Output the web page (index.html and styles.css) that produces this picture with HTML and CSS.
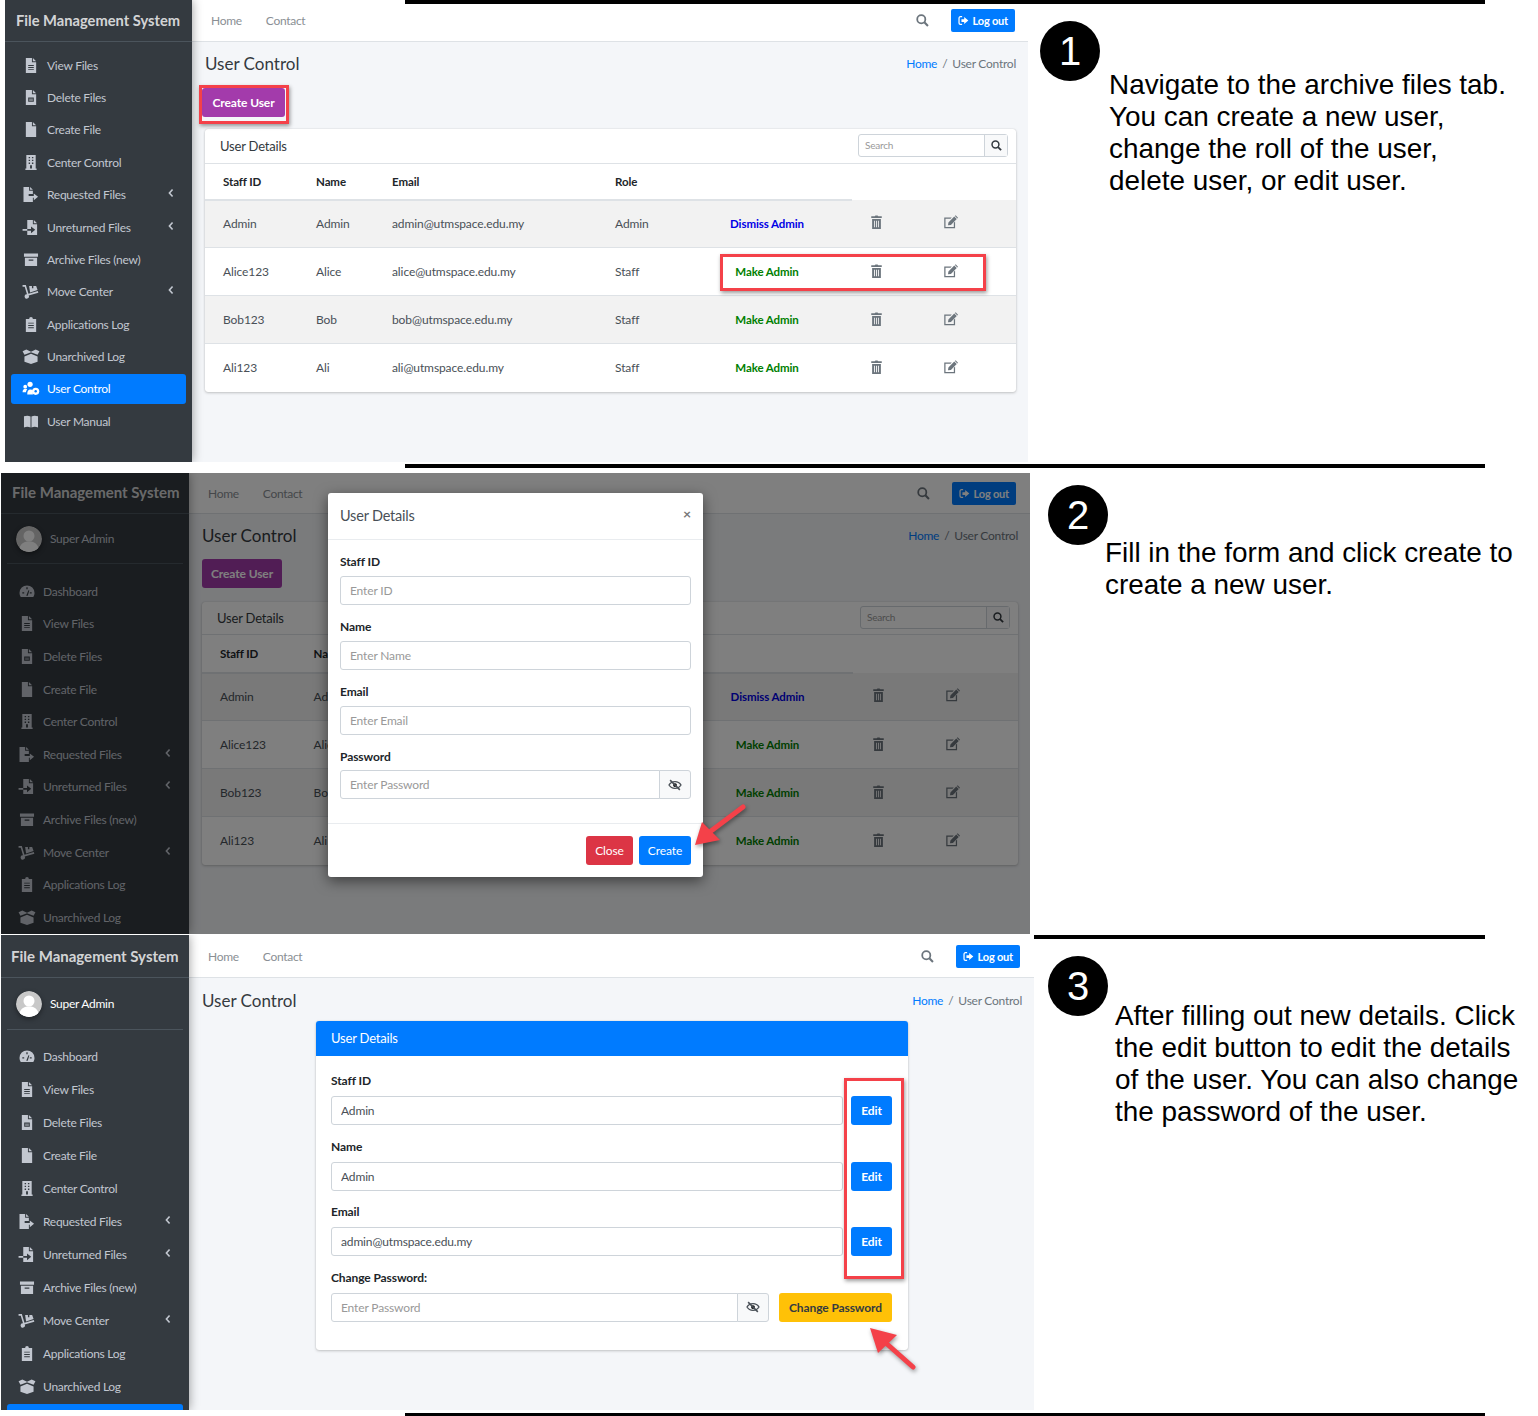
FILE: index.html
```html
<!DOCTYPE html>
<html lang="en">
<head>
    <meta charset="UTF-8">
    <meta name="viewport" content="width=device-width, initial-scale=1.0">
    <title>User Control Guide</title>
    <link rel="stylesheet" href="styles.css">
</head>
<body>
    <svg class="icon-defs" aria-hidden="true">
        <symbol id="i-file" viewBox="0 0 16 16"><path d="M2.500 0H9v4.500h4.500V16h-11zM10 0l3.500 3.500H10z"/></symbol>
        <symbol id="i-file-alt" viewBox="0 0 16 16"><path fill-rule="evenodd" d="M2.500 0H9v4.500h4.500V16h-11zM5 7.500v1h6v-1zM5 9.700v1h6v-1zM5 11.900v1h6v-1z"/><path d="M10 0l3.500 3.500H10z"/></symbol>
        <symbol id="i-file-del" viewBox="0 0 16 16"><path fill-rule="evenodd" d="M2.500 0H9v4.500h4.500V16h-11zM5 8v4.500h6V8zM6 9.200h4v.8H6zM6 10.800h4v.7H6z"/><path d="M10 0l3.500 3.500H10z"/></symbol>
        <symbol id="i-building" viewBox="0 0 16 16"><path fill-rule="evenodd" d="M3 0h10v14.500h1V16H2v-1.500h1zM5.500 2v1.500h1.500V2zM9 2v1.500h1.500V2zM5.500 5v1.500h1.500V5zM9 5v1.500h1.500V5zM5.500 8v1.500h1.500V8zM9 8v1.500h1.500V8zM7 11v3.500h2V11z"/></symbol>
        <symbol id="i-file-export" viewBox="0 0 18 16"><path d="M1 0h6v4h4v3.500H6.500v2H11V16H1zM8 0l3 3H8zM12 7l4.500 3.500L12 14v-2.500H8v-2h4z"/></symbol>
        <symbol id="i-file-import" viewBox="0 0 18 16"><path d="M5 0h6v4.500h4.500V16H5v-4.500h4V14l4.500-3.500L9 7v2.500H5zM12 0l3.500 3.500H12zM0 9.500h5v2H0z"/></symbol>
        <symbol id="i-archive" viewBox="0 0 16 16"><path fill-rule="evenodd" d="M.5 1.500h15v3.500H.5zM1.500 6h13v9h-13zM5.500 8v1.300h5V8z"/></symbol>
        <symbol id="i-dolly" viewBox="0 0 18 16"><path d="M0 1h3.500l2.800 9.500 10-3 .5 1.700-10.300 3a2.300 2.300 0 1 1-1.800-1.200L2.300 2.800H0z"/><path d="M7 2h3v2.500h1.500V2h3l1.500 4.500-8 2.500z"/></symbol>
        <symbol id="i-clipboard" viewBox="0 0 16 16"><path fill-rule="evenodd" d="M2.500 2H6a2 2 0 0 1 4 0h3.500v14h-11zM5 6v1h6V6zM5 8.500v1h6v-1zM5 11v1h6v-1z"/></symbol>
        <symbol id="i-box-open" viewBox="0 0 18 16"><path d="M0 2.500L4 .5 9 3l5-2.500 4 2-2 3.500-7-2.500-7 2.500zM2 8l7-3 7 3v5.500l-7 2.500-7-2.500z"/></symbol>
        <symbol id="i-users-cog" viewBox="0 0 18 16"><circle cx="8" cy="3.500" r="2.800"/><circle cx="2.800" cy="6" r="2"/><path d="M0 12c0-2.500 1-3.800 3-3.800 1 0 1.500.3 2 .8-1 1-1.300 1.800-1.300 3zM5 14.500c0-3.800 1-5.500 3.500-5.500 1.200 0 2 .3 2.500.8v4.700z"/><circle cx="14" cy="11" r="3.800"/><circle cx="14" cy="11" r="1.300" class="icon-hole"/></symbol>
        <symbol id="i-book" viewBox="0 0 16 16"><path d="M.5 2.500c2.500-1 5-1 7 .2v11.800c-2-1.200-4.500-1.200-7-.2zM8.500 2.700c2-1.200 4.500-1.200 7-.2v11.800c-2.500-1-5-1-7 .2z"/></symbol>
        <symbol id="i-gauge" viewBox="0 0 16 16"><path fill-rule="evenodd" d="M8 1.500A8 8 0 0 0 0 9.500c0 1.600.4 3 1.300 4.300h13.400c.9-1.300 1.300-2.700 1.300-4.300a8 8 0 0 0-8-8zM7.300 3.500v2h1.400v-2zM3 8.800v1.400h2V8.800zM11 8.800v1.400h2V8.800zM7.200 12.500h1.600l1.700-5.500-1-.3z"/></symbol>
        <symbol id="i-chevron" viewBox="0 0 10 16"><path d="M7.500 2.500L2.500 8l5 5.500" fill="none" stroke="currentColor" stroke-width="2.600"/></symbol>
        <symbol id="i-search" viewBox="0 0 16 16"><circle cx="6.500" cy="6.500" r="5" fill="none" stroke="currentColor" stroke-width="2.200"/><path d="M10.300 10.300l4.400 4.400" stroke="currentColor" stroke-width="2.600"/></symbol>
        <symbol id="i-signout" viewBox="0 0 16 16"><path d="M6 2.500H3.500A2 2 0 0 0 1.500 4.500v7a2 2 0 0 0 2 2H6" fill="none" stroke="currentColor" stroke-width="1.800"/><path d="M9 3l6 5-6 5v-3H5V6h4z"/></symbol>
        <symbol id="i-trash" viewBox="0 0 16 16"><path fill-rule="evenodd" d="M2 1.500h4L6.800.5h2.400l.8 1H14v2H2zM3 4.500h10V16H3zM5.300 6.500v7.500h1V6.500zM7.500 6.500v7.500h1V6.500zM9.700 6.500v7.500h1V6.500z"/></symbol>
        <symbol id="i-edit" viewBox="0 0 18 16"><path d="M2 2.500h8.500L9 4H3v10h10V9l1.500-1.500V15.500H1.500V2.500z"/><path d="M6.500 8.500L13.500 1.500l3 3-7 7-3.500.5zM14.300.8l.9-.8 2.800 2.800-.8.9z"/></symbol>
        <symbol id="i-eye-slash" viewBox="0 0 18 16"><path d="M9 3.500C5.500 3.500 2.500 5.500 1 8c1.500 2.500 4.500 4.500 8 4.500s6.500-2 8-4.500c-1.500-2.500-4.500-4.500-8-4.500z" fill="none" stroke="currentColor" stroke-width="1.800"/><circle cx="9" cy="8" r="2.500"/><path d="M2.500 1.500l13 13" stroke="currentColor" stroke-width="2"/></symbol>
        <symbol id="i-avatar" viewBox="0 0 26 26"><circle cx="13" cy="13" r="13" fill="#c8c8c8"/><circle cx="13" cy="10" r="5.500" fill="#fff"/><path d="M3.500 22c1.500-5 5-6.500 9.500-6.500s8 1.500 9.500 6.500A13 13 0 0 1 13 26a13 13 0 0 1-9.500-4z" fill="#fff"/></symbol>
    </svg>

    <!-- step 1 -->
    <section class="step step-1">
        <div class="rule rule-top"></div>
        <div class="rule rule-bottom"></div>
        <div class="screen">
            <aside class="sidebar">
                <div class="brand">File Management System</div>
                <ul class="nav">
                    <li class="nav-item"><svg class="nav-icon"><use href="#i-file-alt"/></svg>View Files</li>
                    <li class="nav-item"><svg class="nav-icon"><use href="#i-file-del"/></svg>Delete Files</li>
                    <li class="nav-item"><svg class="nav-icon"><use href="#i-file"/></svg>Create File</li>
                    <li class="nav-item"><svg class="nav-icon"><use href="#i-building"/></svg>Center Control</li>
                    <li class="nav-item"><svg class="nav-icon"><use href="#i-file-export"/></svg>Requested Files<svg class="nav-arrow"><use href="#i-chevron"/></svg></li>
                    <li class="nav-item"><svg class="nav-icon"><use href="#i-file-import"/></svg>Unreturned Files<svg class="nav-arrow"><use href="#i-chevron"/></svg></li>
                    <li class="nav-item"><svg class="nav-icon"><use href="#i-archive"/></svg>Archive Files (new)</li>
                    <li class="nav-item"><svg class="nav-icon"><use href="#i-dolly"/></svg>Move Center<svg class="nav-arrow"><use href="#i-chevron"/></svg></li>
                    <li class="nav-item"><svg class="nav-icon"><use href="#i-clipboard"/></svg>Applications Log</li>
                    <li class="nav-item"><svg class="nav-icon"><use href="#i-box-open"/></svg>Unarchived Log</li>
                    <li class="nav-item active"><svg class="nav-icon"><use href="#i-users-cog"/></svg>User Control</li>
                    <li class="nav-item"><svg class="nav-icon"><use href="#i-book"/></svg>User Manual</li>
                </ul>
            </aside>
            <main class="main">
                <div class="topbar">
                    <a class="top-link">Home</a>
                    <a class="top-link">Contact</a>
                    <svg class="top-search"><use href="#i-search"/></svg>
                    <button class="btn-logout"><svg class="logout-icon"><use href="#i-signout"/></svg>Log out</button>
                </div>
                <div class="content">
                    <div class="title-row">
                        <h1 class="page-title">User Control</h1>
                        <div class="breadcrumb"><a>Home</a><span class="crumb-sep">/</span>User Control</div>
                    </div>
                    <button class="btn-create">Create User</button>
                    <div class="card">
                        <div class="card-head">
                            <span>User Details</span>
                            <div class="search-box"><span class="search-text">Search</span><span class="search-btn"><svg class="search-icon"><use href="#i-search"/></svg></span></div>
                        </div>
                        <table class="users">
                            <colgroup><col class="c1"><col class="c2"><col class="c3"><col class="c4"><col class="c5"><col class="c6"><col class="c7"><col></colgroup>
                            <tr><th>Staff ID</th><th>Name</th><th>Email</th><th>Role</th><th></th><th class="blank"></th><th class="blank"></th><th class="blank"></th></tr>
                            <tr><td>Admin</td><td>Admin</td><td>admin@utmspace.edu.my</td><td>Admin</td><td class="role-action dismiss">Dismiss Admin</td><td class="tool"><svg class="tool-icon"><use href="#i-trash"/></svg></td><td class="tool"><svg class="tool-icon"><use href="#i-edit"/></svg></td><td></td></tr>
                            <tr><td>Alice123</td><td>Alice</td><td>alice@utmspace.edu.my</td><td>Staff</td><td class="role-action make">Make Admin</td><td class="tool"><svg class="tool-icon"><use href="#i-trash"/></svg></td><td class="tool"><svg class="tool-icon"><use href="#i-edit"/></svg></td><td></td></tr>
                            <tr><td>Bob123</td><td>Bob</td><td>bob@utmspace.edu.my</td><td>Staff</td><td class="role-action make">Make Admin</td><td class="tool"><svg class="tool-icon"><use href="#i-trash"/></svg></td><td class="tool"><svg class="tool-icon"><use href="#i-edit"/></svg></td><td></td></tr>
                            <tr><td>Ali123</td><td>Ali</td><td>ali@utmspace.edu.my</td><td>Staff</td><td class="role-action make">Make Admin</td><td class="tool"><svg class="tool-icon"><use href="#i-trash"/></svg></td><td class="tool"><svg class="tool-icon"><use href="#i-edit"/></svg></td><td></td></tr>
                        </table>
                    </div>
                </div>
            </main>
            <div class="mark mark-create"></div>
            <div class="mark mark-row"></div>
        </div>
        <div class="note">
            <div class="badge">1</div>
            <p class="note-text">Navigate to the archive files tab.<br>You can create a new user,<br>change the roll of the user,<br>delete user, or edit user.</p>
        </div>
    </section>

    <!-- step 2 -->
    <section class="step step-2">
        <div class="screen">
            <aside class="sidebar">
                <div class="brand">File Management System</div>
                <div class="user-panel"><svg class="avatar"><use href="#i-avatar"/></svg>Super Admin</div>
                <ul class="nav">
                    <li class="nav-item"><svg class="nav-icon"><use href="#i-gauge"/></svg>Dashboard</li>
                    <li class="nav-item"><svg class="nav-icon"><use href="#i-file-alt"/></svg>View Files</li>
                    <li class="nav-item"><svg class="nav-icon"><use href="#i-file-del"/></svg>Delete Files</li>
                    <li class="nav-item"><svg class="nav-icon"><use href="#i-file"/></svg>Create File</li>
                    <li class="nav-item"><svg class="nav-icon"><use href="#i-building"/></svg>Center Control</li>
                    <li class="nav-item"><svg class="nav-icon"><use href="#i-file-export"/></svg>Requested Files<svg class="nav-arrow"><use href="#i-chevron"/></svg></li>
                    <li class="nav-item"><svg class="nav-icon"><use href="#i-file-import"/></svg>Unreturned Files<svg class="nav-arrow"><use href="#i-chevron"/></svg></li>
                    <li class="nav-item"><svg class="nav-icon"><use href="#i-archive"/></svg>Archive Files (new)</li>
                    <li class="nav-item"><svg class="nav-icon"><use href="#i-dolly"/></svg>Move Center<svg class="nav-arrow"><use href="#i-chevron"/></svg></li>
                    <li class="nav-item"><svg class="nav-icon"><use href="#i-clipboard"/></svg>Applications Log</li>
                    <li class="nav-item"><svg class="nav-icon"><use href="#i-box-open"/></svg>Unarchived Log</li>
                </ul>
            </aside>
            <main class="main">
                <div class="topbar">
                    <a class="top-link">Home</a>
                    <a class="top-link">Contact</a>
                    <svg class="top-search"><use href="#i-search"/></svg>
                    <button class="btn-logout"><svg class="logout-icon"><use href="#i-signout"/></svg>Log out</button>
                </div>
                <div class="content">
                    <div class="title-row">
                        <h1 class="page-title">User Control</h1>
                        <div class="breadcrumb"><a>Home</a><span class="crumb-sep">/</span>User Control</div>
                    </div>
                    <button class="btn-create">Create User</button>
                    <div class="card">
                        <div class="card-head">
                            <span>User Details</span>
                            <div class="search-box"><span class="search-text">Search</span><span class="search-btn"><svg class="search-icon"><use href="#i-search"/></svg></span></div>
                        </div>
                        <table class="users">
                            <colgroup><col class="c1"><col class="c2"><col class="c3"><col class="c4"><col class="c5"><col class="c6"><col class="c7"><col></colgroup>
                            <tr><th>Staff ID</th><th>Name</th><th>Email</th><th>Role</th><th></th><th class="blank"></th><th class="blank"></th><th class="blank"></th></tr>
                            <tr><td>Admin</td><td>Admin</td><td>admin@utmspace.edu.my</td><td>Admin</td><td class="role-action dismiss">Dismiss Admin</td><td class="tool"><svg class="tool-icon"><use href="#i-trash"/></svg></td><td class="tool"><svg class="tool-icon"><use href="#i-edit"/></svg></td><td></td></tr>
                            <tr><td>Alice123</td><td>Alice</td><td>alice@utmspace.edu.my</td><td>Staff</td><td class="role-action make">Make Admin</td><td class="tool"><svg class="tool-icon"><use href="#i-trash"/></svg></td><td class="tool"><svg class="tool-icon"><use href="#i-edit"/></svg></td><td></td></tr>
                            <tr><td>Bob123</td><td>Bob</td><td>bob@utmspace.edu.my</td><td>Staff</td><td class="role-action make">Make Admin</td><td class="tool"><svg class="tool-icon"><use href="#i-trash"/></svg></td><td class="tool"><svg class="tool-icon"><use href="#i-edit"/></svg></td><td></td></tr>
                            <tr><td>Ali123</td><td>Ali</td><td>ali@utmspace.edu.my</td><td>Staff</td><td class="role-action make">Make Admin</td><td class="tool"><svg class="tool-icon"><use href="#i-trash"/></svg></td><td class="tool"><svg class="tool-icon"><use href="#i-edit"/></svg></td><td></td></tr>
                        </table>
                    </div>
                </div>
            </main>
            <div class="backdrop">
                <div class="modal">
                    <div class="modal-head"><span>User Details</span><span class="modal-close">&times;</span></div>
                    <div class="modal-body">
                        <label class="field-label">Staff ID</label>
                        <input class="field" placeholder="Enter ID">
                        <label class="field-label">Name</label>
                        <input class="field" placeholder="Enter Name">
                        <label class="field-label">Email</label>
                        <input class="field" placeholder="Enter Email">
                        <label class="field-label">Password</label>
                        <div class="input-group">
                            <input class="field" placeholder="Enter Password">
                            <span class="eye-btn"><svg class="eye-icon"><use href="#i-eye-slash"/></svg></span>
                        </div>
                    </div>
                    <div class="modal-foot">
                        <button class="btn btn-red">Close</button>
                        <button class="btn btn-blue">Create</button>
                    </div>
                </div>
            </div>
            <svg class="arrow arrow-create" viewBox="0 0 60 50"><path class="arrow-shaft" d="M53 7L21 31"/><path class="arrow-head" d="M5 45L12 22L30 40z"/></svg>
        </div>
        <div class="note">
            <div class="badge">2</div>
            <p class="note-text">Fill in the form and click create to<br>create a new user.</p>
        </div>
    </section>

    <!-- step 3 -->
    <section class="step step-3">
        <div class="rule rule-top"></div>
        <div class="rule rule-bottom"></div>
        <div class="screen">
            <aside class="sidebar">
                <div class="brand">File Management System</div>
                <div class="user-panel"><svg class="avatar"><use href="#i-avatar"/></svg>Super Admin</div>
                <ul class="nav">
                    <li class="nav-item"><svg class="nav-icon"><use href="#i-gauge"/></svg>Dashboard</li>
                    <li class="nav-item"><svg class="nav-icon"><use href="#i-file-alt"/></svg>View Files</li>
                    <li class="nav-item"><svg class="nav-icon"><use href="#i-file-del"/></svg>Delete Files</li>
                    <li class="nav-item"><svg class="nav-icon"><use href="#i-file"/></svg>Create File</li>
                    <li class="nav-item"><svg class="nav-icon"><use href="#i-building"/></svg>Center Control</li>
                    <li class="nav-item"><svg class="nav-icon"><use href="#i-file-export"/></svg>Requested Files<svg class="nav-arrow"><use href="#i-chevron"/></svg></li>
                    <li class="nav-item"><svg class="nav-icon"><use href="#i-file-import"/></svg>Unreturned Files<svg class="nav-arrow"><use href="#i-chevron"/></svg></li>
                    <li class="nav-item"><svg class="nav-icon"><use href="#i-archive"/></svg>Archive Files (new)</li>
                    <li class="nav-item"><svg class="nav-icon"><use href="#i-dolly"/></svg>Move Center<svg class="nav-arrow"><use href="#i-chevron"/></svg></li>
                    <li class="nav-item"><svg class="nav-icon"><use href="#i-clipboard"/></svg>Applications Log</li>
                    <li class="nav-item"><svg class="nav-icon"><use href="#i-box-open"/></svg>Unarchived Log</li>
                    <li class="nav-item active"></li>
                </ul>
            </aside>
            <main class="main">
                <div class="topbar">
                    <a class="top-link">Home</a>
                    <a class="top-link">Contact</a>
                    <svg class="top-search"><use href="#i-search"/></svg>
                    <button class="btn-logout"><svg class="logout-icon"><use href="#i-signout"/></svg>Log out</button>
                </div>
                <div class="content">
                    <div class="title-row">
                        <h1 class="page-title">User Control</h1>
                        <div class="breadcrumb"><a>Home</a><span class="crumb-sep">/</span>User Control</div>
                    </div>
                    <div class="edit-card">
                        <div class="edit-head">User Details</div>
                        <div class="edit-body">
                            <label class="field-label">Staff ID</label>
                            <div class="edit-row"><input class="field" value="Admin"><button class="btn btn-blue btn-edit">Edit</button></div>
                            <label class="field-label">Name</label>
                            <div class="edit-row"><input class="field" value="Admin"><button class="btn btn-blue btn-edit">Edit</button></div>
                            <label class="field-label">Email</label>
                            <div class="edit-row"><input class="field" value="admin@utmspace.edu.my"><button class="btn btn-blue btn-edit">Edit</button></div>
                            <label class="field-label">Change Password:</label>
                            <div class="edit-row">
                                <div class="input-group">
                                    <input class="field" placeholder="Enter Password">
                                    <span class="eye-btn"><svg class="eye-icon"><use href="#i-eye-slash"/></svg></span>
                                </div>
                                <button class="btn btn-yellow">Change Password</button>
                            </div>
                        </div>
                    </div>
                </div>
            </main>
            <div class="mark mark-edit"></div>
            <svg class="arrow arrow-password" viewBox="0 0 55 50"><path class="arrow-shaft" d="M48 44L22 21"/><path class="arrow-head" d="M5 5L32 12L13 30z"/></svg>
        </div>
        <div class="note">
            <div class="badge">3</div>
            <p class="note-text">After filling out new details. Click<br>the edit button to edit the details<br>of the user. You can also change<br>the password of the user.</p>
        </div>
    </section>
</body>
</html>
```

FILE: styles.css
```css
* {
    box-sizing: border-box;
}

body {
    margin: 0;
    background-color: #fff;
    font-family: "Lato", "Liberation Sans", sans-serif;
    font-size: 12px;
    letter-spacing: -0.1px;
    color: #212529;
}

.icon-defs {
    position: absolute;
    width: 0;
    height: 0;
}

.icon-hole {
    fill: #007bff;
}

.step {
    position: relative;
    display: flex;
    align-items: flex-start;
}

.step-1 {
    height: 473px;
    padding-left: 5px;
    --item-h: 32.4px;
}

.step-2 {
    height: 462px;
    padding-left: 1px;
    --item-h: 32.6px;
}

.step-3 {
    height: 481px;
    padding-left: 1px;
    --item-h: 33px;
}

.rule {
    position: absolute;
    left: 405px;
    width: 1080px;
    height: 4px;
    background-color: #000;
    z-index: 2;
}

.rule-top {
    top: 0;
}

.step-1 .rule-bottom {
    top: 464px;
}

.step-3 .rule-bottom {
    top: 478px;
}

.step-3 .rule-top {
    left: 1034px;
    width: 451px;
}

/* screenshot frames */
.screen {
    position: relative;
    display: flex;
    flex-shrink: 0;
    overflow: hidden;
    background-color: #f4f6f9;
}

.step-1 .screen {
    width: 1023px;
    height: 462px;
}

.step-2 .screen {
    width: 1029px;
    height: 461px;
}

.step-3 .screen {
    width: 1033px;
    height: 475px;
}

/* sidebar */
.sidebar {
    width: 188px;
    flex-shrink: 0;
    background-color: #343a40;
    color: #c2c7d0;
    box-shadow: 0 0 10px rgba(0, 0, 0, 0.4);
    z-index: 1;
}

.step-1 .sidebar {
    width: 187px;
}

.brand {
    height: 42px;
    padding-left: 11px;
    line-height: 40px;
    font-size: 14.700px;
    font-weight: 700;
    letter-spacing: 0;
    color: rgba(255, 255, 255, 0.8);
    border-bottom: 1px solid #4b545c;
    white-space: nowrap;
}

.step-2 .brand {
    height: 41px;
    line-height: 38px;
    font-size: 15px;
}

.step-3 .brand {
    height: 43px;
    line-height: 43px;
    padding-left: 10px;
    font-size: 15px;
}

.user-panel {
    display: flex;
    align-items: center;
    height: 50px;
    margin: 0 6px;
    padding-left: 9px;
    border-bottom: 1px solid #4b545c;
    letter-spacing: -0.27px;
    color: #fff;
}

.step-2 .user-panel {
    color: #c2c7d0;
}

.step-3 .user-panel {
    height: 52px;
}

.avatar {
    width: 26px;
    height: 26px;
    margin-right: 8px;
    border-radius: 50%;
    box-shadow: 0 2px 5px rgba(0, 0, 0, 0.4);
}

.nav {
    list-style: none;
    margin: 0;
    padding: 7px 6px 0;
}

.step-2 .nav {
    padding-top: 11px;
}

.step-3 .nav {
    padding-top: 10px;
}

.nav-item {
    display: flex;
    align-items: center;
    height: var(--item-h);
    padding-left: 11px;
    border-radius: 3px;
    letter-spacing: -0.27px;
    white-space: nowrap;
}

.nav-item.active {
    height: 30px;
    margin: 1px 0;
    background-color: #007bff;
    color: #fff;
}

.nav-icon {
    width: 18px;
    height: 15px;
    margin-right: 7px;
    fill: currentColor;
}

.nav-arrow {
    width: 8px;
    height: 10px;
    margin-left: auto;
    margin-right: 11px;
    margin-bottom: 3px;
    color: #c2c7d0;
}

/* top bar */
.main {
    flex: 1;
    min-width: 0;
}

.topbar {
    display: flex;
    align-items: center;
    height: 42px;
    padding: 0 13px 0 19px;
    background-color: #fff;
    border-bottom: 1px solid #dee2e6;
}

.step-2 .topbar {
    height: 41px;
    padding-right: 14px;
}

.step-3 .topbar {
    height: 43px;
    padding-right: 14px;
}

.top-link {
    margin-right: 24px;
    letter-spacing: -0.3px;
    color: #8a8f94;
}

.top-search {
    width: 13px;
    height: 13px;
    margin-left: auto;
    margin-right: 22px;
    color: #6c757d;
}

.btn-logout {
    display: flex;
    align-items: center;
    height: 23px;
    padding: 0 7px;
    border: 0;
    border-radius: 2px;
    background-color: #007bff;
    color: #fff;
    font: 700 11px "Lato", sans-serif;
    letter-spacing: -0.2px;
}

.logout-icon {
    width: 11px;
    height: 11px;
    margin-right: 4px;
    fill: currentColor;
}

/* content */
.content {
    padding: 12px 12px 0 13px;
}

.step-3 .content {
    padding-top: 13px;
}

.title-row {
    display: flex;
    align-items: center;
    justify-content: space-between;
    height: 20px;
    padding-bottom: 2px;
}

.page-title {
    margin: 0;
    font-size: 17px;
    font-weight: 400;
    letter-spacing: 0;
    color: #343a40;
}

.breadcrumb {
    letter-spacing: -0.25px;
    color: #6c757d;
}

.breadcrumb a {
    color: #007bff;
}

.crumb-sep {
    margin: 0 5px;
}

.btn-create {
    display: block;
    width: 83px;
    height: 29px;
    margin: 14px 0 12px -3px;
    border: 0;
    border-radius: 3px;
    background-color: #a33bab;
    color: #fff;
    font: 700 12px "Lato", sans-serif;
    letter-spacing: -0.1px;
}

.step-2 .btn-create {
    width: 80px;
    margin-left: 0;
    margin-top: 13px;
    margin-bottom: 14px;
}

.card {
    background-color: #fff;
    border-radius: 3px;
    box-shadow: 0 0 1px rgba(0, 0, 0, 0.2), 0 1px 3px rgba(0, 0, 0, 0.2);
}

.card-head {
    display: flex;
    align-items: center;
    justify-content: space-between;
    height: 34px;
    padding: 0 8px 0 15px;
    font-size: 13px;
    letter-spacing: -0.2px;
    color: #343a40;
}

.step-2 .card-head {
    height: 32px;
}

.search-box {
    display: flex;
    width: 150px;
    height: 23px;
    margin-bottom: 1px;
    border: 1px solid #ced4da;
    border-radius: 3px;
    font-size: 10px;
}

.search-text {
    flex: 1;
    padding-left: 6px;
    line-height: 21px;
    color: #999;
}

.search-btn {
    display: flex;
    align-items: center;
    justify-content: center;
    width: 23px;
    border-left: 1px solid #ced4da;
    background-color: #f8f9fa;
}

.search-icon {
    width: 11px;
    height: 11px;
    color: #343a40;
}

.users {
    width: 100%;
    table-layout: fixed;
    border-collapse: collapse;
}

.c1 { width: 11.470%; }
.c2 { width: 9.370%; }
.c3 { width: 27.500%; }
.c4 { width: 12.700%; }
.c5 { width: 18.740%; }
.c6 { width: 6.170%; }
.c7 { width: 12.080%; }

.users th {
    height: 36px;
    padding: 0 0 0 18px;
    text-align: left;
    font-size: 11.500px;
    border-top: 1px solid #dee2e6;
    border-bottom: 2px solid #dee2e6;
}

.step-2 .users th {
    height: 38px;
}

.users th.blank {
    border-bottom: 0;
}

.users td {
    height: 48px;
    padding: 0 0 0 18px;
    color: #495057;
    border-bottom: 1px solid #dee2e6;
}

.users tr:nth-child(even) td {
    background-color: #f2f2f2;
}

.users tr:last-child td {
    border-bottom: 0;
}

.users td.role-action {
    padding: 0 18px 0 0;
    text-align: center;
    font-weight: 700;
    font-size: 11.500px;
}

.users td.dismiss {
    color: #0000e6;
}

.users td.make {
    color: #008000;
}

.users td.tool {
    padding: 0;
    text-align: center;
}

.tool-icon {
    display: block;
    width: 15px;
    height: 14px;
    margin: -2px auto 0;
    fill: #6c757d;
}

/* forms */
.field-label {
    display: block;
    margin-bottom: 7px;
    line-height: 15px;
    font-weight: 700;
    font-size: 12px;
}

.field {
    display: block;
    width: 100%;
    height: 29px;
    padding: 0 9px;
    border: 1px solid #ced4da;
    border-radius: 3px;
    background-color: #fff;
    font: 12px "Lato", sans-serif;
    letter-spacing: -0.15px;
    color: #495057;
}

.field::placeholder {
    color: #999;
}

.input-group {
    display: flex;
    flex: 1;
}

.input-group .field {
    flex: 1;
    border-radius: 3px 0 0 3px;
}

.eye-btn {
    display: flex;
    align-items: center;
    justify-content: center;
    width: 32px;
    height: 29px;
    flex-shrink: 0;
    margin-left: -1px;
    border: 1px solid #ced4da;
    border-radius: 0 3px 3px 0;
    background-color: #f8f9fa;
}

.eye-icon {
    width: 14px;
    height: 12px;
    color: #495057;
}

.btn {
    height: 29px;
    padding: 0;
    border: 0;
    border-radius: 3px;
    font: 12px "Lato", sans-serif;
    letter-spacing: -0.1px;
    color: #fff;
    flex-shrink: 0;
}

.btn-red {
    width: 47px;
    background-color: #dc3545;
}

.btn-blue {
    width: 52px;
    background-color: #007bff;
}

.btn-blue.btn-edit {
    width: 41px;
    font-weight: 700;
}

.btn-yellow {
    width: 113px;
    background-color: #ffc107;
    color: #343a40;
    font-weight: 700;
}

/* modal */
.backdrop {
    position: absolute;
    inset: 0;
    z-index: 3;
    background-color: rgba(0, 0, 0, 0.5);
    padding: 20px 0 0 327px;
}

.modal {
    width: 375px;
    background-color: #fff;
    border-radius: 3px;
    box-shadow: 0 4px 14px rgba(0, 0, 0, 0.5);
}

.modal-head {
    display: flex;
    justify-content: space-between;
    align-items: center;
    height: 47px;
    padding: 0 12px 2px;
    font-size: 14.500px;
    letter-spacing: -0.2px;
    color: #495057;
    border-bottom: 1px solid #e9ecef;
}

.modal-close {
    margin-bottom: 4px;
    font-weight: 700;
    font-size: 14px;
    color: #777;
}

.modal-body {
    padding: 14px 12px 24px;
}

.modal-body > .field {
    margin-bottom: 14px;
}

.modal-body .input-group {
    margin-top: -1px;
}

.modal-foot {
    display: flex;
    justify-content: flex-end;
    gap: 6px;
    padding: 12px;
    border-top: 1px solid #e9ecef;
}

/* edit form */
.edit-card {
    width: 592px;
    margin: 10px auto 0;
    background-color: #fff;
    border-radius: 3px;
    box-shadow: 0 0 1px rgba(0, 0, 0, 0.2), 0 1px 3px rgba(0, 0, 0, 0.2);
}

.edit-head {
    height: 35px;
    padding-left: 15px;
    line-height: 34px;
    font-size: 13px;
    letter-spacing: -0.2px;
    color: #fff;
    background-color: #007bff;
    border-radius: 3px 3px 0 0;
}

.edit-body {
    padding: 17px 16px 28px 15px;
}

.edit-body .field-label {
    margin-bottom: 8px;
}

.edit-row {
    display: flex;
    gap: 8px;
    margin-bottom: 13.500px;
}

.edit-row:last-child {
    margin-bottom: 0;
}

.edit-row > .field {
    flex: 1;
}

.edit-row .btn-yellow {
    margin-left: 2px;
}

/* notes on the right */
.note {
    flex-shrink: 0;
}

.step-1 .note {
    padding: 21px 0 0 12px;
}

.step-2 .note {
    padding: 12px 0 0 18px;
}

.step-3 .note {
    padding: 21px 0 0 14px;
}

.badge {
    width: 60px;
    height: 60px;
    border-radius: 50%;
    background-color: #000;
    color: #fff;
    text-align: center;
    font: 40px/60px "Liberation Sans", sans-serif;
}

.note-text {
    margin: 0;
    font: 27.900px/32px "Liberation Sans", sans-serif;
    letter-spacing: 0;
    color: #000;
    white-space: nowrap;
}

.step-1 .note-text {
    margin: -12px 0 0 69px;
}

.step-2 .note-text {
    margin: -8px 0 0 57px;
}

.step-3 .note-text {
    margin: -16px 0 0 67px;
}

/* red call-outs */
.mark {
    position: absolute;
    z-index: 4;
    border: 3px solid #f44149;
    box-shadow: 1px 2px 4px rgba(0, 0, 0, 0.4);
}

.mark-create {
    left: 194px;
    top: 85px;
    width: 90px;
    height: 39px;
}

.mark-row {
    left: 715px;
    top: 254px;
    width: 266px;
    height: 37px;
}

.mark-edit {
    left: 843px;
    top: 143px;
    width: 60px;
    height: 201px;
}

.arrow {
    position: absolute;
    z-index: 4;
    overflow: visible;
    filter: drop-shadow(1px 2px 2px rgba(0, 0, 0, 0.4));
}

.arrow-create {
    left: 689px;
    top: 327px;
    width: 60px;
    height: 50px;
}

.arrow-password {
    left: 864px;
    top: 388px;
    width: 55px;
    height: 50px;
}

.arrow-shaft {
    fill: none;
    stroke: #f44149;
    stroke-width: 5;
    stroke-linecap: round;
}

.arrow-head {
    fill: #f44149;
}
```
